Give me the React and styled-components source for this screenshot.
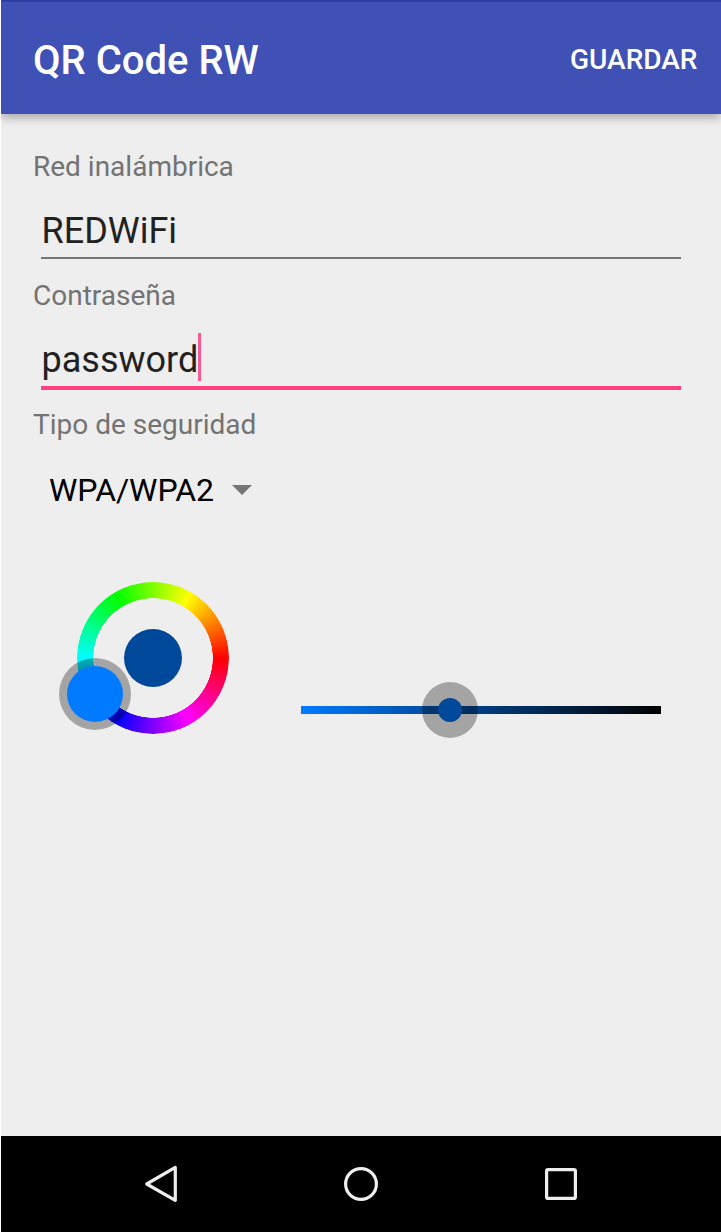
import React from 'react'
import styled, { createGlobalStyle } from 'styled-components'

const GlobalStyle = createGlobalStyle`
  html, body {
    margin: 0;
    padding: 0;
    background: #fff;
  }
  * {
    box-sizing: border-box;
  }
`;

function App() {
  return (
    <Screen>
      <GlobalStyle />
      <AppBar>
        <Title>QR Code RW</Title>
        <SaveButton>GUARDAR</SaveButton>
      </AppBar>
      <Content>
        <Label>Red inalámbrica</Label>
        <Field>
          <Value>REDWiFi</Value>
        </Field>
        <Label>Contraseña</Label>
        <Field $focused>
          <Value>password<Caret /></Value>
        </Field>
        <Label>Tipo de seguridad</Label>
        <Spinner>
          <span>WPA/WPA2</span>
          <SpinnerArrow />
        </Spinner>
        <PickerRow>
          <Wheel>
            <WheelRing />
            <WheelCenter />
            <WheelHandle />
          </Wheel>
          <ValueBar>
            <BarHalo />
            <BarDot />
          </ValueBar>
        </PickerRow>
      </Content>
      <NavBar>
        <NavIcon viewBox="0 0 36 38">
          <path d="M32.3 2.4 L3.7 19 L32.3 35.3 Z" fill="none" stroke="#eee" strokeWidth="3.2" strokeLinejoin="round" />
        </NavIcon>
        <NavIcon viewBox="0 0 36 38">
          <circle cx="18" cy="19" r="15.4" fill="none" stroke="#eee" strokeWidth="3.2" />
        </NavIcon>
        <NavIcon viewBox="0 0 36 38">
          <rect x="3.6" y="4.6" width="28.8" height="28.8" rx="1.5" fill="none" stroke="#eee" strokeWidth="3.2" />
        </NavIcon>
      </NavBar>
    </Screen>
  )
}

const Screen = styled.div`
  width: 721px;
  height: 1232px;
  display: flex;
  flex-direction: column;
  overflow: hidden;
  background: #eeeeee;
  border-left: 1px solid #fff;
  font-family: Roboto, "Liberation Sans", sans-serif;
`;

const AppBar = styled.div`
  height: 114px;
  flex-shrink: 0;
  display: flex;
  align-items: center;
  justify-content: space-between;
  padding: 4px 23.5px 0 32px;
  background: #3f51b5;
  border-top: 2px solid #303f9f;
  box-shadow: 0 3px 10px rgba(0, 0, 0, 0.33);
  position: relative;
  z-index: 1;
`;

const Title = styled.div`
  color: #fff;
  font-size: 40px;
  font-weight: 500;
`;

const SaveButton = styled.div`
  margin-bottom: 2px;
  color: #fff;
  font-size: 28px;
  font-weight: 500;
`;

const Content = styled.div`
  flex: 1;
  padding: 36px 0 0 32px;
`;

const Label = styled.div`
  height: 34px;
  line-height: 34px;
  color: #737373;
  font-size: 28px;
`;

const Field = styled.div`
  width: 640px;
  height: ${props => props.$focused ? '77px' : '75px'};
  margin-left: 8px;
  margin-bottom: ${props => props.$focused ? '18px' : '20px'};
  padding: 23px 0 0 0.5px;
  border-bottom: ${props => props.$focused ? '4px solid #ff4081' : '2px solid #757575'};
`;

const Value = styled.div`
  position: relative;
  display: inline-block;
  color: #212121;
  font-size: 36px;
  line-height: 48px;
`;

const Caret = styled.span`
  position: absolute;
  top: -3px;
  right: -2.5px;
  width: 3px;
  height: 48px;
  background: #ff4081;
  opacity: 0.85;
`;

const Spinner = styled.div`
  display: flex;
  align-items: center;
  gap: 18px;
  height: 96px;
  padding-left: 16px;
  color: #000;
  font-size: 32px;
  letter-spacing: -0.1px;
`;

const SpinnerArrow = styled.div`
  width: 0;
  height: 0;
  border-left: 10px solid transparent;
  border-right: 10px solid transparent;
  border-top: 10px solid #757575;
`;

const PickerRow = styled.div`
  display: flex;
  align-items: flex-end;
  gap: 72px;
  padding: 44px 0 0 44px;
`;

const Wheel = styled.div`
  position: relative;
  width: 152px;
  height: 152px;
`;

const WheelRing = styled.div`
  width: 100%;
  height: 100%;
  border-radius: 50%;
  background: conic-gradient(from 90deg, #f00, #f0f, #00f, #0ff, #0f0, #ff0, #f00);
  -webkit-mask: radial-gradient(circle, transparent 59.5px, #000 60px);
  mask: radial-gradient(circle, transparent 59.5px, #000 60px);
`;

const WheelCenter = styled.div`
  position: absolute;
  left: 47px;
  top: 47px;
  width: 58px;
  height: 58px;
  border-radius: 50%;
  background: #00489a;
`;

const WheelHandle = styled.div`
  position: absolute;
  left: -10px;
  top: 84px;
  width: 56px;
  height: 56px;
  border-radius: 50%;
  background: #007aff;
  box-shadow: 0 0 0 8px rgba(0, 0, 0, 0.31);
`;

const ValueBar = styled.div`
  position: relative;
  width: 360px;
  height: 8px;
  margin-bottom: 20px;
  background: linear-gradient(to right, #007aff, #000);
`;

const BarHalo = styled.div`
  position: absolute;
  left: 121px;
  top: -24px;
  width: 56px;
  height: 56px;
  border-radius: 50%;
  background: rgba(0, 0, 0, 0.31);
`;

const BarDot = styled.div`
  position: absolute;
  left: 137px;
  top: -8px;
  width: 24px;
  height: 24px;
  border-radius: 50%;
  background: #00489a;
`;

const NavBar = styled.div`
  height: 96px;
  flex-shrink: 0;
  display: flex;
  align-items: center;
  justify-content: center;
  gap: 164px;
  background: #000;
`;

const NavIcon = styled.svg`
  width: 36px;
  height: 38px;
`;

export default App
